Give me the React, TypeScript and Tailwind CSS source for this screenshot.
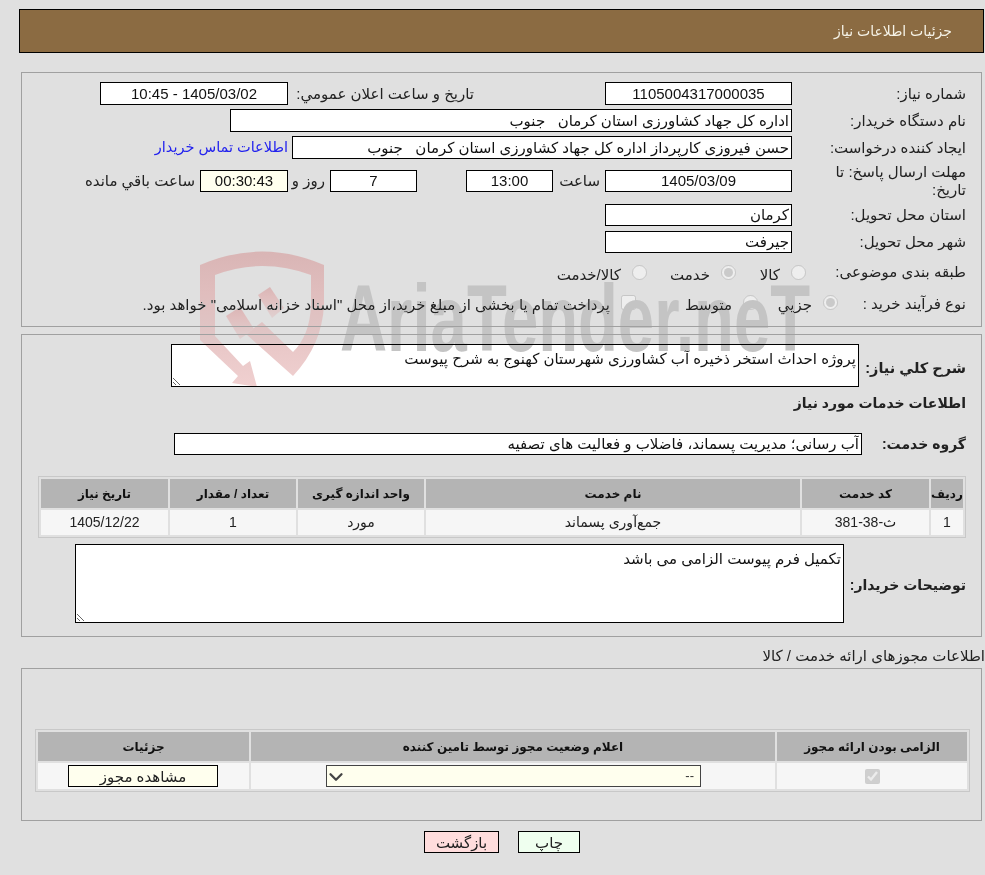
import React from "react";
import { ChevronDown } from "lucide-react";

const fontStack = { fontFamily: '"Liberation Sans", "DejaVu Sans", sans-serif' };

const Box = ({ value, className = "" }: { value: string; className?: string }) => (
  <input
    readOnly
    value={value}
    className={`shrink-0 border border-black bg-white px-[2px] text-[15px] text-[#111] outline-none ${className}`}
  />
);

const Label = ({ children, className = "" }: { children: React.ReactNode; className?: string }) => (
  <div className={`shrink-0 text-[15px] leading-[18px] text-[#222] ${className}`}>{children}</div>
);

const Choice = ({ type, label, width, checked }: { type: string; label: string; width: string; checked?: boolean }) => (
  <label className={`flex shrink-0 items-center text-[15px] text-[#222] ${width}`}>
    <input type={type} disabled defaultChecked={checked} className="m-0 h-[15px] w-[15px] shrink-0" />
    <span className="mr-[11px] whitespace-nowrap pt-[6px]">{label}</span>
  </label>
);

const head = "bg-[#b4b4b4] text-center text-[12px] font-bold text-[#111]";
const cell = "bg-[#f6f6f6] text-center text-[14px] text-[#222]";

const Watermark = () => (
  <svg className="pointer-events-none absolute left-0 top-0 mix-blend-darken" width="985" height="875" viewBox="0 0 985 875">
    <defs>
      <linearGradient id="shield" x1="0" y1="0" x2="0" y2="1">
        <stop offset="0" stopColor="#d9b5b5" />
        <stop offset="1" stopColor="#f0d0d0" />
      </linearGradient>
    </defs>
    <g fill="url(#shield)">
      <path d="M200 265 Q262 238 324 265 L324 305 Q322 345 293 376 L246 334 L262 322 L293 352 Q310 335 311 305 L311 275 Q262 257 215 275 L215 336 L243 366 L250 361 L257 387 L232 383 L238 376 L200 340 Z" />
      <path d="M226 316 L240 307 L254 329 L240 339 Z" />
      <path d="M258 295 L270 287 L284 308 L272 318 Z" />
    </g>
    <text
      x="340"
      y="351"
      textLength="470"
      lengthAdjust="spacingAndGlyphs"
      fontSize="94"
      fontWeight="700"
      fill="#c4c4c4"
      direction="ltr"
      style={{ fontFamily: '"Liberation Sans", sans-serif' }}
    >
      AriaTender.neT
    </text>
  </svg>
);

export default function App() {
  return (
    <div dir="rtl" style={fontStack} className="relative h-[875px] w-[985px] overflow-hidden bg-[#e0e0e0]">
      <div className="pt-[9px]">
        <div className="ml-[19px] mr-[1px] flex h-[44px] items-center border border-black bg-[#8b6b42] pr-[31px] text-[14px] text-[#f5f2e6]">
          جزئیات اطلاعات نیاز
        </div>

        <div className="ml-[21px] mr-[3px] mt-[19px] h-[255px] border border-[#a0a0a0] pr-[15px] pt-[9px]">
          <div className="flex h-[23px] items-center">
            <Label className="w-[174px]">شماره نیاز:</Label>
            <Box value="1105004317000035" className="h-[23px] w-[187px] text-center" />
            <Label className="mr-[131px] w-[181px] whitespace-nowrap">تاریخ و ساعت اعلان عمومي:</Label>
            <Box value="1405/03/02 - 10:45" className="mr-[5px] h-[23px] w-[188px] text-center" />
          </div>
          <div className="mt-[4px] flex h-[23px] items-center">
            <Label className="w-[174px]">نام دستگاه خریدار:</Label>
            <Box value="اداره کل جهاد کشاورزی استان کرمان   جنوب" className="h-[23px] w-[562px]" />
          </div>
          <div className="mt-[4px] flex h-[23px] items-center">
            <Label className="w-[174px]">ایجاد کننده درخواست:</Label>
            <Box value="حسن فیروزی کارپرداز اداره کل جهاد کشاورزی استان کرمان   جنوب" className="h-[23px] w-[500px]" />
            <a className="mr-[4px] whitespace-nowrap text-[14.5px] text-[#2222ee]">اطلاعات تماس خریدار</a>
          </div>
          <div className="mt-[5px] flex h-[34px] items-center">
            <Label className="w-[174px]">
              مهلت ارسال پاسخ: تا
              <br />
              تاریخ:
            </Label>
            <Box value="1405/03/09" className="h-[22px] w-[187px] text-center" />
            <Label className="mr-[5px] w-[46px]">ساعت</Label>
            <Box value="13:00" className="mr-[1px] h-[22px] w-[87px] text-center" />
            <Box value="7" className="mr-[49px] h-[22px] w-[87px] text-center" />
            <Label className="mr-[5px] w-[37px]">روز و</Label>
            <Box value="00:30:43" className="h-[22px] w-[88px] !bg-[#ffffee] text-center" />
            <Label className="mr-[5px] whitespace-nowrap">ساعت باقي مانده</Label>
          </div>
          <div className="mt-[6px] flex h-[22px] items-center">
            <Label className="w-[174px]">استان محل تحویل:</Label>
            <Box value="کرمان" className="h-[22px] w-[187px]" />
          </div>
          <div className="mt-[5px] flex h-[22px] items-center">
            <Label className="w-[174px]">شهر محل تحویل:</Label>
            <Box value="جیرفت" className="h-[22px] w-[187px]" />
          </div>
          <div className="mt-[7px] flex h-[24px] items-center">
            <Label className="w-[160px]">طبقه بندی موضوعی:</Label>
            <Choice type="radio" label="کالا" width="w-[70px]" />
            <Choice type="radio" label="خدمت" width="w-[89px]" checked />
            <Choice type="radio" label="کالا/خدمت" width="w-[120px]" />
          </div>
          <div className="mt-[6px] flex h-[24px] items-center">
            <Label className="w-[128px] pt-[3px]">نوع فرآیند خرید :</Label>
            <Choice type="radio" label="جزیي" width="w-[80px]" checked />
            <Choice type="radio" label="متوسط" width="w-[122px]" />
            <Choice type="checkbox" label='پرداخت تمام یا بخشی از مبلغ خرید،از محل "اسناد خزانه اسلامی" خواهد بود.' width="w-[510px]" />
          </div>
        </div>

        <div className="ml-[21px] mr-[3px] mt-[7px] h-[303px] border border-[#a0a0a0] pr-[15px] pt-[9px]">
          <div className="flex h-[43px] items-center">
            <Label className="w-[107px] whitespace-nowrap pt-[4px] !text-[14.5px] font-bold">شرح کلي نياز:</Label>
            <textarea
              readOnly
              defaultValue="پروژه احداث استخر ذخیره آب کشاورزی شهرستان کهنوج به شرح پیوست"
              className="h-[43px] w-[688px] shrink-0 border border-black bg-white px-[2px] pt-[3px] text-[15px] text-[#111] outline-none"
            />
          </div>
          <div className="mt-[6px] flex h-[20px] items-center text-[14px] font-bold text-[#222]">اطلاعات خدمات مورد نیاز</div>
          <div className="mt-[20px] flex h-[22px] items-center">
            <Label className="w-[104px] whitespace-nowrap !text-[14px] font-bold">گروه خدمت:</Label>
            <Box value="آب رسانی؛ مدیریت پسماند، فاضلاب و فعالیت های تصفیه" className="h-[22px] w-[688px]" />
          </div>
          <table className="mt-[21px] w-[928px] table-fixed border-separate border-spacing-[2px] border border-[#c8c8c8]">
            <thead>
              <tr className="h-[29px]">
                <th className={`w-[32px] ${head}`}>ردیف</th>
                <th className={`w-[127px] ${head}`}>کد خدمت</th>
                <th className={`w-[374px] ${head}`}>نام خدمت</th>
                <th className={`w-[126px] ${head}`}>واحد اندازه گیری</th>
                <th className={`w-[126px] ${head}`}>تعداد / مقدار</th>
                <th className={`w-[127px] ${head}`}>تاریخ نیاز</th>
              </tr>
            </thead>
            <tbody>
              <tr className="h-[25px]">
                <td className={cell}>1</td>
                <td className={cell}>ث-38-381</td>
                <td className={cell}>جمع‌آوری پسماند</td>
                <td className={cell}>مورد</td>
                <td className={cell}>1</td>
                <td className={cell}>1405/12/22</td>
              </tr>
            </tbody>
          </table>
          <div className="mt-[6px] flex h-[79px] items-center">
            <Label className="w-[122px] whitespace-nowrap pt-[2px] !text-[14px] font-bold">توضیحات خریدار:</Label>
            <textarea
              readOnly
              defaultValue="تکمیل فرم پیوست الزامی می باشد"
              className="h-[79px] w-[769px] shrink-0 border border-black bg-white px-[2px] pt-[3px] text-[15px] text-[#111] outline-none"
            />
          </div>
        </div>

        <div className="mt-[8px] flex h-[23px] items-center text-[15px] text-[#222]">اطلاعات مجوزهای ارائه خدمت / کالا</div>

        <div className="ml-[21px] mr-[3px] h-[153px] border border-[#a0a0a0] pr-[11px] pt-[60px]">
          <table className="w-[935px] table-fixed border-separate border-spacing-[2px] border border-[#c8c8c8]">
            <thead>
              <tr className="h-[29px]">
                <th className={`w-[190px] ${head}`}>الزامی بودن ارائه مجوز</th>
                <th className={`w-[524px] ${head}`}>اعلام وضعیت مجوز توسط تامین کننده</th>
                <th className={`w-[211px] ${head}`}>جزئیات</th>
              </tr>
            </thead>
            <tbody>
              <tr className="h-[26px]">
                <td className={cell}>
                  <input type="checkbox" disabled defaultChecked className="m-0 h-[15px] w-[15px] align-middle" />
                </td>
                <td className={cell}>
                  <div className="relative mr-[74px] h-[22px] w-[375px]">
                    <select className="block h-[22px] w-full appearance-none border border-[#444] bg-[#ffffee] pr-[6px] text-[13px] text-[#333] outline-none">
                      <option>--</option>
                    </select>
                    <ChevronDown className="pointer-events-none absolute left-[-1px] top-[1px] h-[22px] w-[22px] text-[#444]" strokeWidth={2.5} />
                  </div>
                </td>
                <td className={cell}>
                  <button className="mr-[31px] block h-[22px] w-[150px] border border-black bg-[#ffffee] text-[15px] text-[#222]">مشاهده مجوز</button>
                </td>
              </tr>
            </tbody>
          </table>
        </div>

        <div className="mt-[10px] flex h-[22px] pr-[405px]">
          <button className="h-[22px] w-[62px] border border-black bg-[#efffef] text-[15px] text-[#222]">چاپ</button>
          <button className="mr-[19px] h-[22px] w-[75px] border border-black bg-[#ffdddd] text-[15px] text-[#222]">بازگشت</button>
        </div>
      </div>
      <Watermark />
    </div>
  );
}
